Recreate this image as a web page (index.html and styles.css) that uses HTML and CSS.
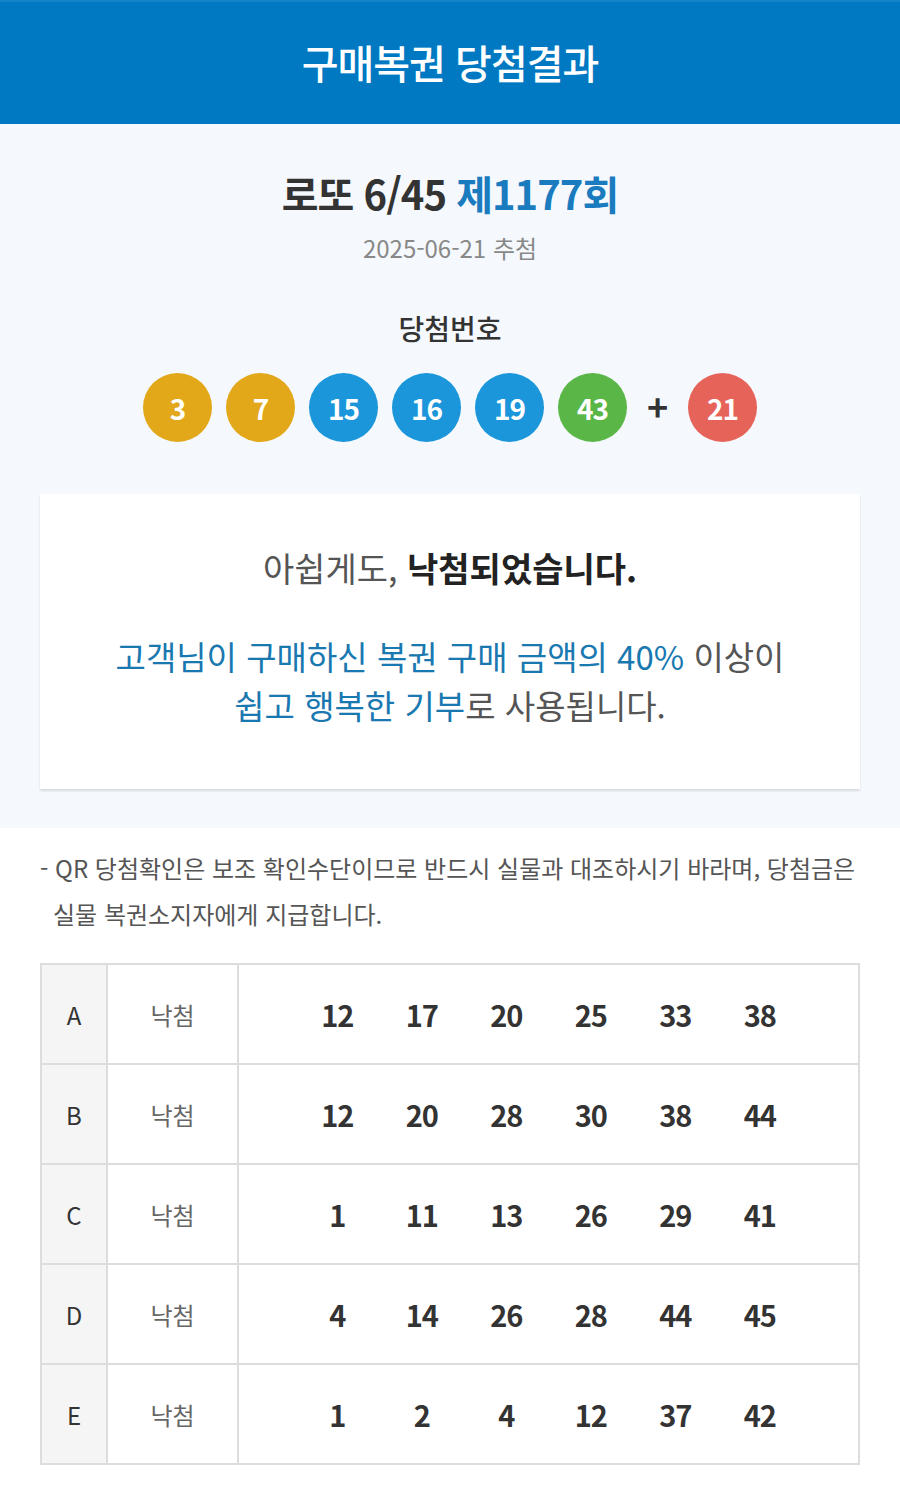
FILE: index.html
```html
<!DOCTYPE html>
<html lang="ko">
<head>
<meta charset="utf-8">
<link rel="stylesheet" href="styles.css">
</head>
<body>
<header class="top"><h1>구매복권 당첨결과</h1></header>
<section class="result">
  <h2 class="round">로또 6/45 <span class="blue">제1177회</span></h2>
  <p class="date">2025-06-21 추첨</p>
  <h3 class="label">당첨번호</h3>
  <div class="balls">
    <span class="ball y">3</span>
    <span class="ball y">7</span>
    <span class="ball b">15</span>
    <span class="ball b">16</span>
    <span class="ball b">19</span>
    <span class="ball g">43</span>
    <span class="plus">+</span>
    <span class="ball r">21</span>
  </div>
  <div class="card">
    <p class="msg">아쉽게도, <strong>낙첨되었습니다.</strong></p>
    <p class="info"><span class="blue2">고객님이 구매하신 복권 구매 금액의 40%</span> 이상이<br><span class="blue2">쉽고 행복한 기부</span>로 사용됩니다.</p>
  </div>
</section>
<section class="lower">
  <p class="notice">- QR 당첨확인은 보조 확인수단이므로 반드시 실물과 대조하시기 바라며, 당첨금은 실물 복권소지자에게 지급합니다.</p>
  <table class="games">
    <tr><th>A</th><td class="st">낙첨</td><td class="nums"><span>12</span><span>17</span><span>20</span><span>25</span><span>33</span><span>38</span></td></tr>
    <tr><th>B</th><td class="st">낙첨</td><td class="nums"><span>12</span><span>20</span><span>28</span><span>30</span><span>38</span><span>44</span></td></tr>
    <tr><th>C</th><td class="st">낙첨</td><td class="nums"><span>1</span><span>11</span><span>13</span><span>26</span><span>29</span><span>41</span></td></tr>
    <tr><th>D</th><td class="st">낙첨</td><td class="nums"><span>4</span><span>14</span><span>26</span><span>28</span><span>44</span><span>45</span></td></tr>
    <tr><th>E</th><td class="st">낙첨</td><td class="nums"><span>1</span><span>2</span><span>4</span><span>12</span><span>37</span><span>42</span></td></tr>
  </table>
</section>
</body>
</html>
```
FILE: styles.css
```css
* { box-sizing: border-box; }
html, body { margin: 0; padding: 0; }
body {
  font-family: "Noto Sans CJK KR", "Noto Sans", sans-serif;
  background: #ffffff;
  color: #333;
  width: 900px;
}
.top {
  background: #0079c2;
  height: 124px;
  display: flex;
  align-items: center;
  justify-content: center;
  border-top: 2px solid #1584c6;
}
.top h1 {
  margin: 0 0 2px;
  color: #fff;
  font-size: 40px;
  font-weight: 500;
  letter-spacing: -1px;
}
.result {
  background: #f5f9fd;
  padding: 39px 40px 39px;
  text-align: center;
}
.round {
  margin: 0;
  font-size: 40px;
  font-weight: 700;
  line-height: 60px;
  letter-spacing: -1px;
  color: #333;
}
.blue { color: #1a7bbf; }
.date {
  margin: 5px 0 0;
  font-size: 24px;
  color: #888;
  line-height: 40px;
}
.label {
  margin: 40px 0 0;
  font-size: 28px;
  font-weight: 500;
  line-height: 40px;
  color: #333;
}
.balls {
  margin-top: 25px;
  display: flex;
  justify-content: center;
  align-items: center;
  gap: 14px;
}
.ball {
  width: 69px;
  height: 69px;
  border-radius: 50%;
  color: #fff;
  font-size: 28px;
  font-weight: 700;
  display: flex;
  align-items: center;
  justify-content: center;
  letter-spacing: -1px;
}
.ball.y { background: #e2a81a; }
.ball.b { background: #1b96db; }
.ball.g { background: #5bb648; }
.ball.r { background: #e6635a; }
.plus {
  font-size: 36px;
  font-weight: 700;
  color: #333;
  width: 33px;
  text-align: center;
  margin-top: -6px;
}
.card {
  margin-top: 52px;
  background: #fff;
  box-shadow: 0 2px 2px rgba(0,0,0,0.12);
  padding: 49px 20px 59px;
}
.msg {
  margin: 0;
  font-size: 34px;
  color: #555;
  line-height: 50px;
}
.msg strong { color: #222; font-weight: 700; }
.info {
  margin: 39px 0 0;
  font-size: 33px;
  line-height: 49px;
  color: #555;
}
.blue2 { color: #1a78b0; }
.lower {
  padding: 17px 40px 40px;
  background: #fff;
}
.notice {
  margin: 0;
  font-size: 24px;
  color: #555;
  line-height: 46px;
  padding-left: 13px;
  text-indent: -13px;
}
.games {
  margin-top: 26px;
  width: 820px;
  border-collapse: collapse;
  border: 2px solid #ddd;
}
.games th, .games td {
  border: 2px solid #ddd;
  height: 100px;
  padding: 0;
  text-align: center;
}
.games th {
  width: 66px;
  background: #f5f5f5;
  font-weight: 400;
  font-size: 24px;
  color: #333;
}
.games td.st {
  width: 131px;
  font-size: 24px;
  color: #666;
}
.games td.nums {
  text-align: left;
  padding-left: 56px;
}
.nums span {
  display: inline-block;
  width: 84.5px;
  text-align: center;
  font-size: 29px;
  font-weight: 700;
  color: #333;
  letter-spacing: -1px;
}
```
